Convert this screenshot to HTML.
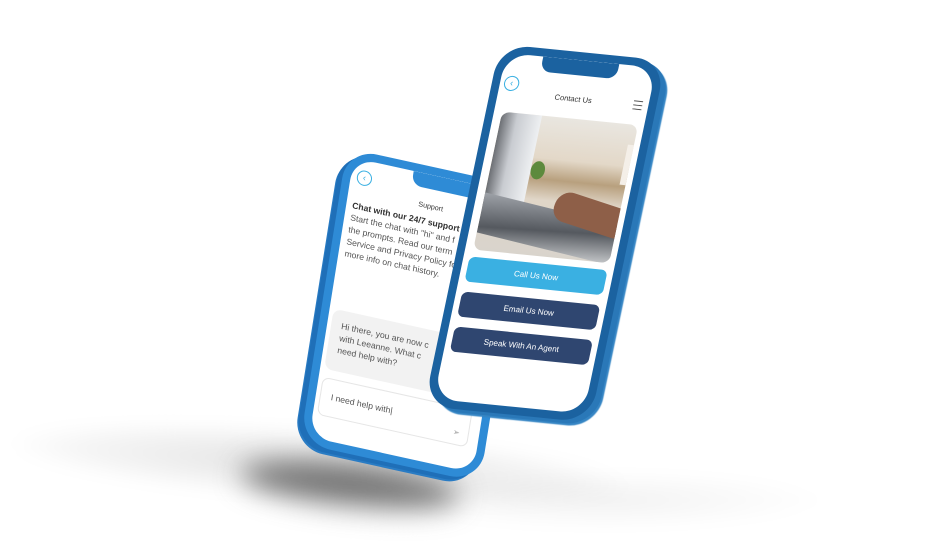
<!DOCTYPE html>
<html><head><meta charset="utf-8"><style>
html,body{margin:0;padding:0;background:#fff;width:928px;height:554px;overflow:hidden;position:relative;font-family:"Liberation Sans",sans-serif}
.sh{position:absolute;border-radius:50%;}
.ph{position:absolute;left:0;top:0;transform-origin:0 0;}
.frame{position:absolute;inset:0;border-radius:30px;}
.scr{position:absolute;left:8px;top:8px;right:8px;bottom:8px;background:#fff;border-radius:24px;overflow:hidden}
.notch{position:absolute;top:0;left:50%;width:70px;height:14px;margin-left:-35px;border-radius:0 0 10px 10px}
.back{position:absolute;width:13px;height:13px;border:1.3px solid #3ab0e2;border-radius:50%;color:#3ab0e2;font-size:9px;line-height:12px;text-align:center}
.btn{position:absolute;left:6px;right:6px;height:25px;border-radius:6px;color:#fff;font-size:8px;line-height:25px;text-align:center}
</style></head><body>
<!-- shadow -->
<div class="sh" style="left:10px;top:430px;width:620px;height:70px;background:radial-gradient(ellipse at 50% 50%,rgba(0,0,0,.12),rgba(0,0,0,.04) 55%,rgba(0,0,0,0) 72%);filter:blur(8px);transform:rotate(4deg)"></div>
<div class="sh" style="left:380px;top:470px;width:450px;height:60px;background:radial-gradient(ellipse,rgba(0,0,0,.05),rgba(0,0,0,0) 70%);filter:blur(6px)"></div>
<div class="sh" style="left:240px;top:465px;width:220px;height:40px;background:rgba(60,60,60,.7);filter:blur(14px);transform:rotate(6deg)"></div>

<!-- left phone -->
<div class="ph" style="width:180px;height:295px;transform:matrix(1,0.22,-0.16,1,347,148)">
 <div class="frame" style="background:#2e8bd6;box-shadow:-5px 4px 0 #1f6fb8,-6px 6px 0 #2a7cc4"></div>
 <div class="scr" style="border-radius:22px">
  <div class="notch" style="background:#2e8bd6;left:58%"></div>
  <div class="back" style="left:6px;top:10px">‹</div>
  <div style="position:absolute;left:0;right:0;top:28px;text-align:center;font-size:7px;color:#333">Support</div>
  <div style="position:absolute;left:6px;top:40px;width:190px;font-size:8.5px;line-height:12px;color:#555">
   <b style="color:#333">Chat with our 24/7 support</b><br>Start the chat with "hi" and f<br>the prompts. Read our term<br>Service and Privacy Policy fo<br>more info on chat history.</div>
  <div style="position:absolute;left:4px;top:150px;width:170px;height:60px;background:#f2f2f2;border-radius:8px;font-size:8.5px;line-height:12px;color:#555;padding:9px 10px;box-sizing:border-box">Hi there, you are now c<br>with Leeanne. What c<br>need help with?</div>
  <div style="position:absolute;left:4px;top:218px;width:150px;height:38px;border:1px solid #e6e6e6;border-radius:7px;font-size:8.5px;color:#555;padding:12px 10px;box-sizing:border-box">I need help with|<span style="position:absolute;right:8px;top:20px;font-size:8px;color:#999">➢</span></div>
 </div>
</div>

<!-- right phone -->
<div class="ph" style="width:166px;height:362px;transform:matrix(1,0.1,-0.21,1,500,44)">
 <div class="frame" style="background:#1b62a0;box-shadow:6px 3px 0 #2a78b8,8px 5px 1px #3585c4"></div>
 <div class="scr">
  <div class="notch" style="background:#1b62a0;width:76px;margin-left:-38px;height:15px"></div>
  <div class="back" style="left:4px;top:22px">‹</div>
  <div style="position:absolute;left:0;right:0;top:34px;text-align:center;font-size:7.5px;color:#333">Contact Us</div>
  <div style="position:absolute;right:6px;top:34px;width:9px;border-top:1px solid #555;box-shadow:0 3px 0 #fff,0 4px 0 #555,0 7px 0 #fff,0 8px 0 #555"></div>
  <div style="position:absolute;left:8px;right:6px;top:58px;height:138px;border-radius:8px;overflow:hidden;background:linear-gradient(180deg,#e9e6e0 0%,#e3d8c8 30%,#b8a07e 45%,#e0d6c8 60%,#d9d4cc 100%)">
   <div style="position:absolute;left:0;top:0;width:40px;height:95px;background:linear-gradient(90deg,#6c6f74,#c9ccd1 40%,#eef0f2)"></div>
   <div style="position:absolute;left:40px;top:45px;width:14px;height:18px;border-radius:50%;background:#5d8a3d"></div>
   <div style="position:absolute;left:0;top:92px;width:160px;height:40px;background:linear-gradient(170deg,#9ea2a8,#55595f 50%,#d8dadc);transform:skewY(8deg)"></div>
   <div style="position:absolute;left:70px;top:78px;width:80px;height:30px;border-radius:14px;background:#8e5f48;transform:rotate(12deg)"></div>
   <div style="position:absolute;left:130px;top:20px;width:30px;height:40px;background:#f4efe8"></div>
  </div>
  <div class="btn" style="top:203px;background:#3ab0e2">Call Us Now</div>
  <div class="btn" style="top:238px;background:#2f4670">Email Us Now</div>
  <div class="btn" style="top:273px;background:#2f4670">Speak With An Agent</div>
 </div>
</div>
</body></html>
